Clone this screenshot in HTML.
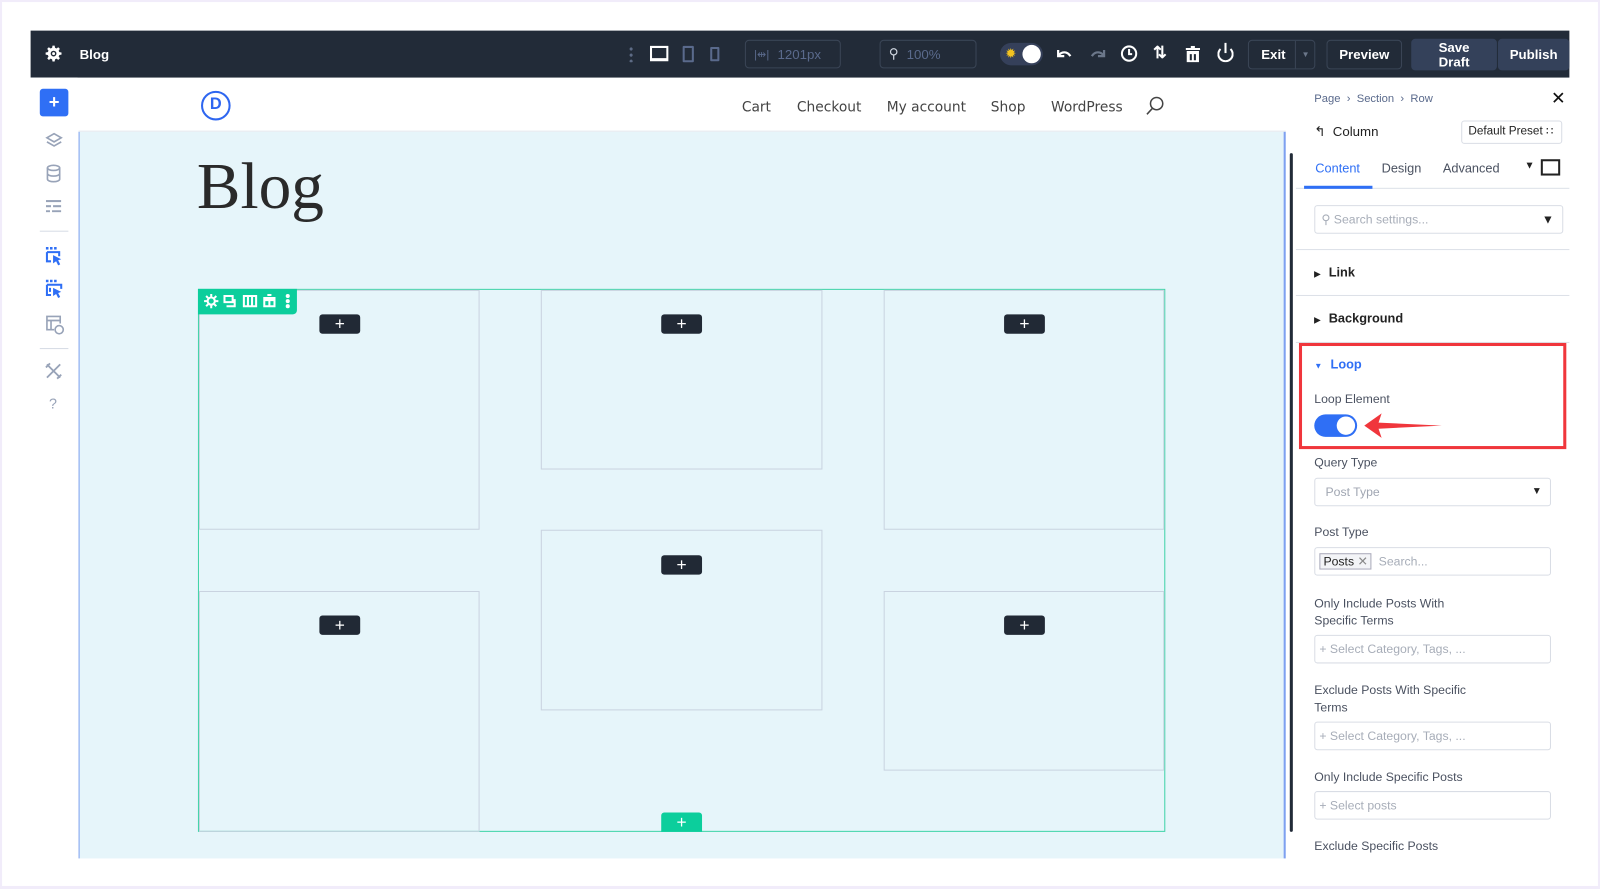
<!DOCTYPE html>
<html><head><meta charset="utf-8"><style>
*{box-sizing:border-box;margin:0;padding:0}
html,body{width:1600px;height:889px;overflow:hidden;background:#f1ecfa}
#w{position:absolute;left:0;top:0;width:1568px;height:871px;transform:scale(1.0204,1.0207);transform-origin:0 0;font-family:"Liberation Sans",sans-serif}
.a{position:absolute}
#frame{left:2px;top:2px;width:1564px;height:866px;background:#fff}
#top{left:30px;top:30px;width:1508px;height:46px;background:#222b38;color:#fff}
.btn{position:absolute;border:1px solid #3a4556;border-radius:4px;color:#fff;font-weight:bold;font-size:13px;display:flex;align-items:center;justify-content:center}
.ic{position:absolute}
#side{left:30px;top:76px;width:46px;height:765px;background:#fff}
#canvas{left:77px;top:129px;width:1183px;height:712px;background:#e6f5fa;border-left:1.5px solid #7ea0f0}
#hdr{left:77px;top:77px;width:1183px;height:52px;background:#fff;border-bottom:1px solid #e3e8ee}
.nav{position:absolute;top:97px;color:#444;font-family:"DejaVu Sans",sans-serif;font-size:13.5px}
.col{position:absolute;border:1px solid #c9d3e0}
.plus{position:absolute;width:40px;height:19px;background:#212935;border-radius:3px;color:#fff;font-size:17px;line-height:19px;text-align:center}
#panel{left:1270px;top:77px;width:268px;height:764px;background:#fff;font-size:12px;color:#333}
.lbl{position:absolute;left:18px;font-size:12px;color:#4a5160}
.inp{position:absolute;left:18px;width:232px;height:28px;border:1px solid #d9dde5;border-radius:3px;font-size:12px;color:#a7adb8;padding-left:6px;line-height:26px}
.sec{position:absolute;left:18px;font-size:12.5px;font-weight:bold;color:#222}
.hr{position:absolute;left:0;width:268px;height:1px;background:#dde1e8}
</style></head><body><div id="w">
<div class="a" id="frame"></div>
<div class="a" id="top">
 <svg class="ic" style="left:14px;top:14px" width="17" height="17" viewBox="0 0 24 24"><path fill="#fff" d="M12 8a4 4 0 100 8 4 4 0 000-8zm0 2a2 2 0 110 4 2 2 0 010-4zM10.5 1h3l.5 3 2 1 2.5-1.8 2.2 2.2L19 8l1 2 3 .5v3l-3 .5-1 2 1.8 2.5-2.2 2.2L16 19l-2 1-.5 3h-3l-.5-3-2-1-2.5 1.8-2.2-2.2L5 16l-1-2-3-.5v-3l3-.5 1-2-1.8-2.5 2.2-2.2L8 5l2-1z"/></svg>
 <div class="a" style="left:48px;top:16px;font-size:13px;font-weight:bold">Blog</div>
 <div class="a" style="left:587px;top:15px;width:3px;height:16px;background:radial-gradient(circle,#5d6b85 1.5px,transparent 1.6px) 0 0/3px 6px"></div>
 <div class="a" style="left:607px;top:15px;width:18px;height:15px;border:2px solid #fff;border-bottom-width:3px"></div>
 <div class="a" style="left:639px;top:15px;width:11px;height:16px;border:2px solid #5a6a8c;border-radius:1px"></div>
 <div class="a" style="left:666px;top:16px;width:9px;height:14px;border:2px solid #5a6a8c;border-radius:1px"></div>
 <div class="btn" style="left:700px;top:9px;width:94px;height:28px;justify-content:flex-start;padding-left:8px;color:#5a6a8c;font-weight:normal"><span style="font-size:11px;margin-right:8px">|⇹|</span>1201px</div>
 <div class="btn" style="left:832px;top:9px;width:95px;height:28px;justify-content:flex-start;padding-left:8px;color:#5a6a8c;font-weight:normal"><span style="color:#cfd6e0;margin-right:8px">⚲</span>100%</div>
 <div class="a" style="left:950px;top:12px;width:42px;height:22px;background:#35405a;border-radius:11px"></div>
 <div class="a" style="left:955px;top:16px;color:#f3c320;font-size:13px;line-height:14px">✹</div>
 <div class="a" style="left:972px;top:14px;width:18px;height:18px;border-radius:50%;background:#fff"></div>
 <svg class="ic" style="left:1005px;top:16px" width="16" height="14" viewBox="0 0 16 14" fill="none" stroke="#fff" stroke-width="2.2"><path d="M2 3v6h6M2 9c3-5 9-5 12 0"/></svg>
 <svg class="ic" style="left:1038px;top:16px" width="16" height="14" viewBox="0 0 16 14" fill="none" stroke="#6b778a" stroke-width="2.2"><path d="M14 3v6H8M14 9C11 4 5 4 2 9"/></svg>
 <svg class="ic" style="left:1068px;top:14px" width="17" height="17" viewBox="0 0 17 17" fill="none" stroke="#fff" stroke-width="2"><circle cx="8.5" cy="8.5" r="7"/><path d="M8.5 4v5h3"/></svg>
 <div class="a" style="left:1100px;top:12px;font-size:16px;color:#fff;font-weight:bold">⇅</div>
 <svg class="ic" style="left:1132px;top:15px" width="14" height="16" viewBox="0 0 14 16"><path fill="#fff" d="M5 0h4v2h5v2H0V2h5zM1 5h12v11H1zM4 8v6h2V8zm4 0v6h2V8z"/></svg>
 <div class="a" style="left:1163px;top:15px;width:16px;height:16px;border:2px solid #fff;border-radius:50%;border-top-color:transparent"></div>
 <div class="a" style="left:1170px;top:12px;width:2px;height:10px;background:#fff"></div>
 <div class="btn" style="left:1193px;top:9px;width:66px;height:29px;justify-content:flex-start;padding-left:12px">Exit<span style="position:absolute;left:45px;top:0;height:27px;border-left:1px solid #3a4556;width:20px;text-align:center;color:#6b778a;font-size:8px;line-height:27px">▼</span></div>
 <div class="btn" style="left:1270px;top:9px;width:74px;height:29px">Preview</div>
 <div class="btn" style="left:1353px;top:8px;width:84px;height:31px;background:#34415a;border:none;line-height:14px;text-align:center">Save<br>Draft</div>
 <div class="btn" style="left:1438px;top:8px;width:70px;height:31px;background:#34415a;border:none">Publish</div>
</div>
<div class="a" id="side">
 <div class="a" style="left:9px;top:11px;width:28px;height:27px;background:#2f6ff5;border-radius:3px;color:#fff;font-weight:bold;font-size:18px;text-align:center;line-height:26px">+</div>
 <svg class="ic" style="left:14px;top:53px" width="18" height="18" viewBox="0 0 18 18" fill="none" stroke="#98a3b8" stroke-width="1.6"><path d="M9 2l7 4-7 4-7-4z M2 10l7 4 7-4"/></svg>
 <svg class="ic" style="left:15px;top:85px" width="15" height="18" viewBox="0 0 15 18" fill="none" stroke="#98a3b8" stroke-width="1.6"><ellipse cx="7.5" cy="3.5" rx="6" ry="2.5"/><path d="M1.5 3.5v11c0 1.4 2.7 2.5 6 2.5s6-1.1 6-2.5v-11M1.5 9c0 1.4 2.7 2.5 6 2.5s6-1.1 6-2.5"/></svg>
 <svg class="ic" style="left:15px;top:120px" width="15" height="12" viewBox="0 0 15 12" fill="#98a3b8"><rect x="0" y="0" width="15" height="2"/><rect x="0" y="5" width="5" height="2"/><rect x="7" y="5" width="8" height="2"/><rect x="0" y="10" width="4" height="2"/><rect x="6" y="10" width="9" height="2"/></svg>
 <div class="a" style="left:9px;top:150px;width:28px;height:1px;background:#d6dbe5"></div>
 <svg class="ic" style="left:14px;top:166px" width="18" height="20" viewBox="0 0 18 20"><g fill="#2f6ff5"><rect x="1" y="0" width="2.5" height="2.5"/><rect x="5" y="0" width="2.5" height="2.5"/><rect x="9" y="0" width="2.5" height="2.5"/></g><path d="M2 5v9h4M14 9V5H2" fill="none" stroke="#2f6ff5" stroke-width="2"/><path d="M8 8l8 4-3 1 2 4-2 1-2-4-3 2z" fill="#2f6ff5"/></svg>
 <svg class="ic" style="left:14px;top:198px" width="18" height="20" viewBox="0 0 18 20"><g fill="#2f6ff5"><rect x="1" y="0" width="2.5" height="2.5"/><rect x="5" y="0" width="2.5" height="2.5"/><rect x="9" y="0" width="2.5" height="2.5"/></g><path d="M2 5v10h4M16 9V5H2M5 8v4" fill="none" stroke="#2f6ff5" stroke-width="2"/><path d="M8 8l8 4-3 1 2 4-2 1-2-4-3 2z" fill="#2f6ff5"/></svg>
 <svg class="ic" style="left:14px;top:232px" width="20" height="20" viewBox="0 0 20 20" fill="none" stroke="#98a3b8" stroke-width="1.6"><path d="M9 15H2V2h13v7M2 6h13M6 6v9"/><circle cx="14" cy="15" r="4"/></svg>
 <div class="a" style="left:9px;top:265px;width:28px;height:1px;background:#d6dbe5"></div>
 <svg class="ic" style="left:14px;top:279px" width="17" height="17" viewBox="0 0 17 17" fill="none" stroke="#98a3b8" stroke-width="1.8"><path d="M2 2l13 13M15 2L2 15M1 5l4-4M12 16l4-4"/></svg>
 <div class="a" style="left:18px;top:311px;color:#98a3b8;font-size:14px">?</div>
</div>
<div class="a" id="canvas"></div>
<div class="a" style="left:1258px;top:129px;width:2px;height:712px;background:#7ea0f0"></div>
<div class="a" style="left:1264px;top:150px;width:3px;height:665px;background:#222b38;border-radius:2px"></div>
<div class="a" id="hdr"></div>
<div class="a" style="left:197px;top:89px;width:29px;height:29px;border:2.5px solid #2e66f0;border-radius:50%;color:#2e66f0;font-weight:bold;font-size:16px;text-align:center;line-height:24px">D</div>
<div class="nav" style="left:727px">Cart</div>
<div class="nav" style="left:781px">Checkout</div>
<div class="nav" style="left:869px">My account</div>
<div class="nav" style="left:971px">Shop</div>
<div class="nav" style="left:1030px">WordPress</div>
<svg class="ic" style="left:1123px;top:94px" width="18" height="19" viewBox="0 0 18 19" fill="none" stroke="#444" stroke-width="1.5"><circle cx="10.5" cy="7.5" r="6"/><path d="M6.5 12L1 18"/></svg>
<div class="a" style="left:193px;top:146px;font-family:'Liberation Serif',serif;font-size:64px;color:#2a2a2a">Blog</div>
<div class="a" style="left:194px;top:283px;width:948px;height:532px;border:1.5px solid #3fd3a7"></div>
<div class="col" style="left:195px;top:284px;width:275px;height:235px"></div>
<div class="col" style="left:195px;top:579px;width:275px;height:236px"></div>
<div class="col" style="left:530px;top:284px;width:276px;height:176px"></div>
<div class="col" style="left:530px;top:519px;width:276px;height:177px"></div>
<div class="col" style="left:866px;top:284px;width:275px;height:235px"></div>
<div class="col" style="left:866px;top:579px;width:275px;height:176px"></div>
<div class="a" style="left:194px;top:283px;width:97px;height:25px;background:#0cce9c;border-radius:0 0 4px 0"></div>
<svg class="ic" style="left:199px;top:287px" width="88" height="16" viewBox="0 0 88 16" fill="none" stroke="#fff" stroke-width="2">
 <circle cx="8" cy="8" r="3.5"/><path d="M8 1v3M8 12v3M1 8h3M12 8h3M3 3l2 2M11 11l2 2M13 3l-2 2M5 11l-2 2"/>
 <path d="M21 3h8v6h-8zM31 6v7h-8"/>
 <path d="M40 3h12v10H40zM44 3v10M48 3v10"/>
 <path d="M59 5h12M63 2h4M60 7h10v6H60zM65 7v6"/>
 <circle cx="83" cy="3" r="1" fill="#fff"/><circle cx="83" cy="8" r="1" fill="#fff"/><circle cx="83" cy="13" r="1" fill="#fff"/>
</svg>
<div class="plus" style="left:313px;top:308px">+</div>
<div class="plus" style="left:648px;top:308px">+</div>
<div class="plus" style="left:984px;top:308px">+</div>
<div class="plus" style="left:648px;top:544px">+</div>
<div class="plus" style="left:313px;top:603px">+</div>
<div class="plus" style="left:984px;top:603px">+</div>
<div class="plus" style="left:648px;top:796px;height:19px;background:#0cce9c;border-radius:3px 3px 0 0">+</div>
<div class="a" id="panel">
 <div class="a" style="left:18px;top:14px;font-size:11px;color:#5a6a8c">Page &nbsp;›&nbsp; Section &nbsp;›&nbsp; Row</div>
 <div class="a" style="left:250px;top:10px;font-size:17px;color:#111">✕</div>
 <div class="a" style="left:18px;top:44px;font-size:13px;color:#222">↰ &nbsp;Column</div>
 <div class="a" style="left:162px;top:41px;width:99px;height:23px;border:1px solid #d9dde5;border-radius:3px;font-size:11.5px;line-height:21px;padding-left:6px;color:#222">Default Preset ∷</div>
 <div class="a" style="left:19px;top:81px;font-size:12.5px;color:#2f6ff5">Content</div>
 <div class="a" style="left:84px;top:81px;font-size:12.5px;color:#4a5160">Design</div>
 <div class="a" style="left:144px;top:81px;font-size:12.5px;color:#4a5160">Advanced</div>
 <div class="a" style="left:224px;top:80px;font-size:10px;color:#222">▼</div>
 <div class="a" style="left:240px;top:79px;width:19px;height:16px;border:2px solid #222"></div>
 <div class="hr" style="top:107px"></div>
 <div class="a" style="left:8px;top:105px;width:67px;height:3px;background:#2f6ff5"></div>
 <div class="inp" style="top:124px;left:18px;width:244px;height:28px">⚲ Search settings...<span style="position:absolute;right:8px;color:#222">▼</span></div>
 <div class="hr" style="top:167px"></div>
 <div class="sec" style="top:183px"><span style="font-size:8px;margin-right:8px">▶</span>Link</div>
 <div class="hr" style="top:212px"></div>
 <div class="sec" style="top:228px"><span style="font-size:8px;margin-right:8px">▶</span>Background</div>
 <div class="hr" style="top:258px"></div>
 <div class="sec" style="top:273px;color:#2f6ff5"><span style="font-size:8px;margin-right:8px">▼</span>Loop</div>
 <div class="lbl" style="top:307px">Loop Element</div>
 <div class="a" style="left:18px;top:329px;width:42px;height:22px;background:#2f6ff5;border-radius:11px"></div>
 <div class="a" style="left:40px;top:331px;width:18px;height:18px;background:#fff;border-radius:50%"></div>
 <svg class="ic" style="left:66px;top:326px" width="80" height="28" viewBox="0 0 80 28"><path d="M1 14L18 2l-3 9 62 3-62 3 3 9z" fill="#f0363c"/></svg>
 <div class="a" style="left:3px;top:259px;width:262px;height:104px;border:3px solid #f0363c"></div>
 <div class="lbl" style="top:369px">Query Type</div>
 <div class="inp" style="top:391px;color:#a0a6b2;padding-left:10px">Post Type<span style="position:absolute;right:8px;color:#222;font-size:10px">▼</span></div>
 <div class="lbl" style="top:437px">Post Type</div>
 <div class="inp" style="top:459px;padding-left:4px"><span style="border:1px solid #aab;background:#f3f4f7;color:#222;padding:0 3px;font-size:12px">Posts <span style="color:#888">✕</span></span>&nbsp; Search...</div>
 <div class="lbl" style="top:506px;line-height:17px">Only Include Posts With<br>Specific Terms</div>
 <div class="inp" style="top:545px;padding-left:4px">+ Select Category, Tags, ...</div>
 <div class="lbl" style="top:591px;line-height:17px">Exclude Posts With Specific<br>Terms</div>
 <div class="inp" style="top:630px;padding-left:4px">+ Select Category, Tags, ...</div>
 <div class="lbl" style="top:677px">Only Include Specific Posts</div>
 <div class="inp" style="top:698px;padding-left:4px">+ Select posts</div>
 <div class="lbl" style="top:745px">Exclude Specific Posts</div>
</div>
</div></body></html>
